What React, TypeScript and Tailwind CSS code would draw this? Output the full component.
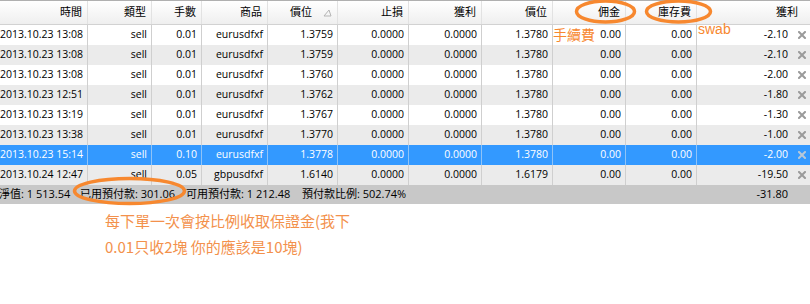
import React from "react";

const GRID =
  "grid grid-cols-[88px_64px_50px_66px_70px_71px_73px_71px_73px_71px_113px]";

const FONT = {
  fontFamily: '"Open Sans", "Noto Sans CJK TC", sans-serif',
};

type Trade = {
  time: string;
  lots: string;
  symbol: string;
  open: string;
  price: string;
  profit: string;
};

const TRADES: Trade[] = [
  { time: "2013.10.23 13:08", lots: "0.01", symbol: "eurusdfxf", open: "1.3759", price: "1.3780", profit: "-2.10" },
  { time: "2013.10.23 13:08", lots: "0.01", symbol: "eurusdfxf", open: "1.3759", price: "1.3780", profit: "-2.10" },
  { time: "2013.10.23 13:08", lots: "0.01", symbol: "eurusdfxf", open: "1.3760", price: "1.3780", profit: "-2.00" },
  { time: "2013.10.23 12:51", lots: "0.01", symbol: "eurusdfxf", open: "1.3762", price: "1.3780", profit: "-1.80" },
  { time: "2013.10.23 13:19", lots: "0.01", symbol: "eurusdfxf", open: "1.3767", price: "1.3780", profit: "-1.30" },
  { time: "2013.10.23 13:38", lots: "0.01", symbol: "eurusdfxf", open: "1.3770", price: "1.3780", profit: "-1.00" },
  { time: "2013.10.23 15:14", lots: "0.10", symbol: "eurusdfxf", open: "1.3778", price: "1.3780", profit: "-2.00" },
  { time: "2013.10.24 12:47", lots: "0.05", symbol: "gbpusdfxf", open: "1.6140", price: "1.6179", profit: "-19.50" },
];

const SELECTED = 6;

const HEADERS = ["時間", "類型", "手數", "商品", "價位", "止損", "獲利", "價位", "佣金", "庫存費"];

function CloseIcon({ light }: { light?: boolean }) {
  return (
    <svg width="8" height="8" viewBox="0 0 8 8" className="shrink-0">
      <path
        d="M1 1 L7 7 M7 1 L1 7"
        stroke={light ? "#b8c8d8" : "#9a9a9a"}
        strokeWidth="2"
        strokeLinecap="square"
      />
    </svg>
  );
}

function Cell({
  children,
  selected,
}: {
  children: React.ReactNode;
  selected: boolean;
}) {
  return (
    <div
      className={`flex items-center justify-end overflow-hidden whitespace-nowrap pr-[4px] border-r ${
        selected ? "border-[#8fc3f7]" : "border-[#cfcfcf]"
      }`}
    >
      {children}
    </div>
  );
}

export default function App() {
  return (
    <div
      className="relative h-[304px] w-[810px] overflow-hidden bg-white text-[10.5px] text-black"
      style={FONT}
    >
      {/* header */}
      <div
        className={`${GRID} h-[25px] border-t border-b border-t-[#b0b0b0] border-b-[#d2d2d2] bg-linear-to-b from-white to-[#efefef] text-[11px]`}
      >
        {HEADERS.map((h, i) => (
          <div
            key={i}
            className="flex items-center justify-end border-r border-[#e2e2e2] pr-[5px]"
          >
            <span>{h}</span>
            {i === 4 && (
              <svg width="9" height="8" viewBox="0 0 9 8" className="ml-[11px]">
                <path d="M1 7 L6 1 L8 7 Z" fill="none" stroke="#b5b5b5" strokeWidth="1" />
              </svg>
            )}
          </div>
        ))}
        <div className="flex items-center justify-end pr-[12px]">
          <span>獲利</span>
        </div>
      </div>

      {/* rows */}
      {TRADES.map((t, i) => {
        const sel = i === SELECTED;
        const bg = sel ? "bg-[#3399ff] text-white" : i % 2 === 0 ? "bg-white" : "bg-[#ebebeb]";
        return (
          <div key={i} className={`${GRID} h-[20px] ${bg}`}>
            <Cell selected={sel}>{t.time}</Cell>
            <Cell selected={sel}>sell</Cell>
            <Cell selected={sel}>{t.lots}</Cell>
            <Cell selected={sel}>{t.symbol}</Cell>
            <Cell selected={sel}>{t.open}</Cell>
            <Cell selected={sel}>0.0000</Cell>
            <Cell selected={sel}>0.0000</Cell>
            <Cell selected={sel}>{t.price}</Cell>
            <Cell selected={sel}>0.00</Cell>
            <Cell selected={sel}>0.00</Cell>
            <div className="flex items-center justify-end whitespace-nowrap">
              <span>{t.profit}</span>
              <span className="ml-[9px] mr-[4px] flex w-[9px] justify-center">
                <CloseIcon light={sel} />
              </span>
            </div>
          </div>
        );
      })}

      {/* summary */}
      <div className="flex h-[19px] items-center justify-between bg-[#c8c8c8] pr-[22px] text-[11px] whitespace-nowrap">
        <div className="ml-[-1px] flex">
          <span className="w-[81px]">淨值: 1 513.54</span>
          <span className="w-[106px]">已用預付款: 301.06</span>
          <span className="w-[116px]">可用預付款: 1 212.48</span>
          <span>預付款比例: 502.74%</span>
        </div>
        <span>-31.80</span>
      </div>

      {/* note */}
      <div
        className="pl-[105px] pt-[4px] text-[15px] leading-[25.5px] text-[#f3914c]"
        style={{ fontFamily: '"Noto Sans CJK TC", sans-serif' }}
      >
        <div>每下單一次會按比例收取保證金(我下</div>
        <div>0.01只收2塊 你的應該是10塊)</div>
      </div>

      {/* hand-drawn markup over the table */}
      <svg
        className="pointer-events-none absolute inset-0"
        width="810"
        height="304"
        viewBox="0 0 810 304"
      >
        <g fill="none" stroke="#f7882f" strokeWidth="3.5">
          <ellipse cx="605.5" cy="11.5" rx="29" ry="10.5" />
          <ellipse cx="678.5" cy="11.5" rx="32" ry="10.5" />
          <ellipse cx="129.5" cy="191" rx="55" ry="12.5" />
        </g>
      </svg>
      <span
        className="absolute left-[553px] top-[25px] text-[14px] leading-[18px] text-[#f7882f]"
        style={{ fontFamily: '"Noto Sans CJK TC", sans-serif' }}
      >
        手續費
      </span>
      <span
        className="absolute left-[698px] top-[20px] text-[14px] leading-[18px] text-[#f7882f]"
        style={{ fontFamily: '"Liberation Sans", sans-serif' }}
      >
        swab
      </span>
    </div>
  );
}
